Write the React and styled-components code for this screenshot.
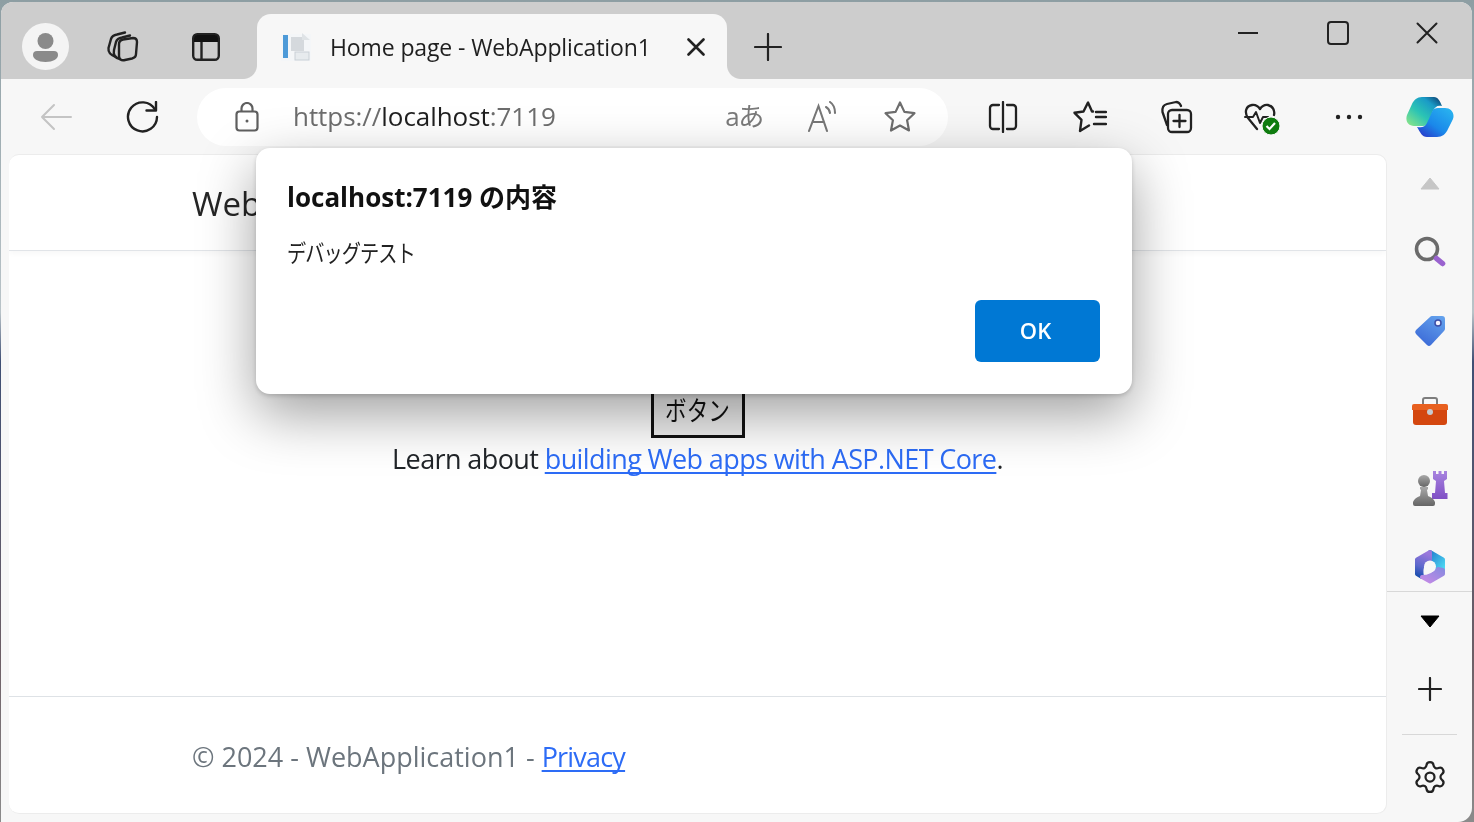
import React from "react";
import styled, { createGlobalStyle } from "styled-components";
import { Settings } from "lucide-react";

const Global = createGlobalStyle`
  html, body { margin: 0; padding: 0; background: #55606b; }
  body { font-family: "Open Sans", "Noto Sans CJK JP", sans-serif; overflow: hidden; }
  * { box-sizing: border-box; }
`;

const Desktop = styled.div`
  width: 1474px;
  height: 822px;
  padding: 2px 2px 0 1px;
  background: linear-gradient(180deg, #8d9ea3 0, #b9c3c8 38%, #3f4f74 44%, #6d5f66 80%, #8b8b8b 100%);
  position: relative;
  filter: blur(0.35px);
`;
const Win = styled.div`
  width: 100%;
  height: 100%;
  display: flex;
  flex-direction: column;
  background: #f7f7f7;
  border-radius: 12px 12px 14px 0;
  overflow: hidden;
`;
const TabStrip = styled.div`
  height: 77px;
  flex: none;
  background: #cdcdcd;
  display: flex;
  align-items: flex-end;
  padding-left: 11px;
`;
const StripSlot = styled.div`
  width: ${p => p.$w}px;
  height: 65px;
  display: flex;
  align-items: center;
  justify-content: center;
`;
const Tab = styled.div`
  width: 470px;
  height: 65px;
  margin-left: 11px;
  background: #f7f7f7;
  border-radius: 14px 14px 0 0;
  display: flex;
  align-items: center;
  padding: 0 22px 0 24px;
  position: relative;
  &::before, &::after {
    content: "";
    position: absolute;
    bottom: 0;
    width: 14px;
    height: 14px;
  }
  &::before { left: -14px; background: radial-gradient(circle at 0 0, #cdcdcd 13.5px, #f7f7f7 14.5px); }
  &::after { right: -14px; background: radial-gradient(circle at 100% 0, #cdcdcd 13.5px, #f7f7f7 14.5px); }
`;
const TabTitle = styled.span`
  flex: 1;
  margin-left: 19px;
  font-size: 23px;
  letter-spacing: -0.12px;
  color: #1f1f1f;
  white-space: nowrap;
`;
const Spacer = styled.div`
  flex: 1;
`;
const WinControls = styled.div`
  display: flex;
  align-self: flex-start;
  padding: 8px 0 0 0;
`;
const WinBtn = styled.div`
  width: 89.5px;
  height: 46px;
  display: flex;
  align-items: center;
  justify-content: center;
`;
const Toolbar = styled.div`
  height: 75px;
  flex: none;
  display: flex;
  align-items: center;
  padding: 0 0 0 12px;
`;
const ToolSlot = styled.div`
  width: ${p => p.$w || 86}px;
  height: 58px;
  flex: none;
  display: flex;
  align-items: center;
  justify-content: center;
  margin-left: ${p => p.$ml || 0}px;
`;
const Address = styled.div`
  width: 751px;
  height: 58px;
  margin: 0 12px;
  background: #fff;
  border-radius: 29px;
  display: flex;
  align-items: center;
  padding-left: 38px;
  flex: none;
`;
const Url = styled.div`
  width: 412px;
  margin-left: 34px;
  margin-top: -2px;
  font-size: 26px;
  letter-spacing: -0.05px;
  color: #1f1f1f;
  white-space: nowrap;
`;
const UrlDim = styled.span`
  color: #6d6d6d;
`;
const AddrIcon = styled.div`
  width: 78px;
  display: flex;
  justify-content: center;
  align-items: center;
`;
const TranslateGlyph = styled.span`
  font-size: 26px;
  letter-spacing: -1.5px;
  color: #7a7a7a;
  margin-top: -3px;
`;
const Body = styled.div`
  flex: 1;
  min-height: 0;
  display: flex;
  padding-left: 8px;
`;
const Page = styled.div`
  width: 1378px;
  height: 660px;
  flex: none;
  background: #fff;
  border: 1px solid #ececec;
  border-width: 1px 1px 1px 0;
  border-radius: 10px;
  display: flex;
  flex-direction: column;
  overflow: hidden;
`;
const Navbar = styled.div`
  height: 96px;
  flex: none;
  border-bottom: 1px solid #e1e4e8;
  box-shadow: 0 2px 6px rgba(0,0,0,.04);
  display: flex;
  align-items: center;
  padding-left: 183px;
  font-size: 33px;
  color: #262626;
  padding-top: 1px;
`;
const Main = styled.div`
  flex: 1;
  display: flex;
  flex-direction: column;
  align-items: center;
  padding-top: 134px;
  font-size: 27px;
  color: #212529;
`;
const PageButton = styled.button`
  width: 94px;
  height: 53px;
  background: #efefef;
  border: 3px solid #111;
  font: inherit;
  font-size: 27px;
  color: #111;
  padding: 0 0 4px;
  display: flex;
  align-items: center;
  justify-content: center;
`;
const NarrowJa = styled.span`
  display: inline-block;
  transform: scaleX(${p => p.$x});
  transform-origin: ${p => p.$origin || "center"};
`;
const Learn = styled.p`
  margin: 2px 0 0;
  letter-spacing: -0.6px;
  line-height: 38px;
`;
const Link = styled.a`
  color: #2d6cf6;
  text-decoration: underline;
  text-decoration-skip-ink: none;
  text-decoration-thickness: 2px;
  text-underline-offset: 3px;
  letter-spacing: ${p => p.$ls || "inherit"};
`;
const Footer = styled.div`
  height: 117px;
  flex: none;
  border-top: 1px solid #dee2e6;
  display: flex;
  align-items: center;
  padding: 2px 0 0 183px;
  font-size: 27px;
  color: #6c757d;
  letter-spacing: 0;
`;
const Sidebar = styled.div`
  flex: 1;
  min-width: 0;
  display: flex;
  flex-direction: column;
  align-items: center;
`;
const SideSlot = styled.div`
  height: ${p => p.$h}px;
  margin-top: ${p => p.$mt || 0}px;
  width: 100%;
  flex: none;
  display: flex;
  align-items: center;
  justify-content: center;
`;
const SideRule = styled.div`
  width: ${p => p.$w}px;
  height: 1px;
  flex: none;
  margin-top: ${p => p.$mt || 0}px;
  background: #d8d8d8;
`;
const Dialog = styled.div`
  position: absolute;
  left: 256px;
  top: 148px;
  width: 876px;
  height: 246px;
  background: #fff;
  border-radius: 14px;
  box-shadow: 0 20px 56px rgba(0,0,0,.38), 0 2px 4px rgba(0,0,0,.16);
  padding: 30px 32px 32px 31px;
  display: flex;
  flex-direction: column;
`;
const DialogTitle = styled.div`
  font-weight: 700;
  font-size: 26px;
  line-height: 38px;
  color: #111;
`;
const DialogText = styled.div`
  margin-top: 19px;
  font-size: 24px;
  line-height: 36px;
  color: #222;
  letter-spacing: -1.2px;
`;
const DialogActions = styled.div`
  margin-top: auto;
  display: flex;
  justify-content: flex-end;
`;
const OkButton = styled.button`
  width: 125px;
  height: 62px;
  border: 0;
  border-radius: 6px;
  background: #0078d4;
  color: #fff;
  padding: 0 4px 2px 0;
  font: 600 22px "Open Sans", sans-serif;
`;

const Ic = ({ w, h, vb, children, sw = 2.4, c = "#222" }) => (
  <svg width={w} height={h} viewBox={vb || `0 0 ${w} ${h}`} fill="none" stroke={c} strokeWidth={sw} strokeLinecap="round" strokeLinejoin="round">{children}</svg>
);

const Avatar = () => (
  <svg width="47" height="47" viewBox="0 0 47 47">
    <circle cx="23.5" cy="23.5" r="23.5" fill="#f4f4f4" />
    <circle cx="23.5" cy="18" r="8" fill="#8a8a8a" />
    <path d="M11 32a4 4 0 0 1 4-4h17a4 4 0 0 1 4 4c0 4-5 7-12.500 7S11 36 11 32z" fill="#8a8a8a" />
  </svg>
);
const TabGroup = () => (
  <Ic w={33} h={31}>
    <path d="M10 26 C4 24 2 21 2.500 17 L5 8 C6 5 8 4 11 3.500 L19 1.500" />
    <path d="M14 28 C9 27 7 24 8 19 L10 11 C11 8 13 7 16 6.500 L24 4.500" />
    <path d="M13 13 C13 10 15 9 17 8.500 L27 7 C30 7 31 8 31 11 L30 23 C30 26 28 27 26 27.500 L19 29 C15 30 13 28 13 25 Z" />
  </Ic>
);
const VerticalTabs = () => (
  <svg width="28" height="28" viewBox="0 0 28 28" fill="none">
    <rect x="1.200" y="1.200" width="25.600" height="25.600" rx="4" stroke="#222" strokeWidth="2.400" />
    <path d="M2 5a3 3 0 0 1 3-3h18a3 3 0 0 1 3 3v4H2z" fill="#111" />
    <path d="M9.500 9v18" stroke="#222" strokeWidth="2.400" />
  </svg>
);
const Favicon = () => (
  <svg width="30" height="30" viewBox="0 0 30 30">
    <rect x="0" y="2" width="30" height="27" fill="#f4f6f8" />
    <rect x="2" y="3" width="5" height="23" fill="#4d9ad8" />
    <rect x="10" y="5" width="13" height="14" fill="#d5d9dd" />
    <rect x="14" y="20" width="14" height="8" fill="#e7ebee" stroke="#c9d0d6" />
    <path d="M21 1l8 7H21z" fill="#dfe3e6" />
  </svg>
);
const Cross = ({ s = 16, sw = 2.6 }) => (
  <Ic w={s} h={s} sw={sw}><path d={`M1.500 1.500L${s - 1.5} ${s - 1.5}M${s - 1.5} 1.500L1.500 ${s - 1.5}`} /></Ic>
);
const Plus = ({ s = 28, sw = 2.2 }) => (
  <Ic w={s} h={s} sw={sw}><path d={`M${s / 2} 1V${s - 1}M1 ${s / 2}H${s - 1}`} /></Ic>
);
const Back = () => (
  <Ic w={32} h={28} c="#c4c4c4" sw={2}><path d="M31 14H2M14 2L2 14l12 12" /></Ic>
);
const Refresh = () => (
  <Ic w={33} h={32} sw={2.4}>
    <path d="M29 8.500A14.500 14.500 0 1 0 31 16" />
    <path d="M20.500 9.500H30V1" />
  </Ic>
);
const Lock = () => (
  <svg width="24" height="30" viewBox="0 0 24 30" fill="none" stroke="#5f5f5f" strokeWidth="2.200">
    <rect x="1.500" y="9.500" width="21" height="19" rx="3" />
    <path d="M6.500 9.500V6.500a5.500 5.500 0 0 1 11 0v3" />
    <circle cx="12" cy="19" r="1.500" fill="#5f5f5f" stroke="none" />
  </svg>
);
const Star = () => (
  <Ic w={34} h={34} c="#6e6e6e" sw={2.2}>
    <path d="M17 2.500l4.400 9.400 10.100 1.300-7.400 7.100 1.900 10.200L17 25.500l-9 5 1.900-10.200-7.400-7.100 10.100-1.300z" />
  </Ic>
);
const ReadAloud = () => (
  <svg width="32" height="32" viewBox="0 0 32 32" fill="none" stroke="#777" strokeWidth="2.100" strokeLinecap="round">
    <path d="M3 30L12.500 5 21 30M6.500 21H18" />
    <path d="M20 6c2 1 3.500 3 4 6M24 1c3 2 5 6 5 11" />
  </svg>
);
const Split = () => (
  <Ic w={30} h={32} sw={2.300}>
    <path d="M11 4H5a3 3 0 0 0-3 3v18a3 3 0 0 0 3 3h6M19 4h6a3 3 0 0 1 3 3v18a3 3 0 0 1-3 3h-6M15 1v30" />
  </Ic>
);
const Favs = () => (
  <Ic w={34} h={32} sw={2.400}>
    <path d="M20 10.500h-1L15 1.500l-4.500 9-9 1.300 7 7L7 30l9-5.500" />
    <path d="M23 11h10M23 16h10M21 23h12" />
  </Ic>
);
const Collections = () => (
  <Ic w={34} h={34} sw={2.300}>
    <path d="M8 25L3.500 12C3 8 4 5 8 4l9-2c3 0 4 1.500 5 4" />
    <rect x="9" y="10" width="23" height="22" rx="4" />
    <path d="M20.500 15v12M14.500 21h12" />
  </Ic>
);
const Health = () => (
  <svg width="38" height="36" viewBox="0 0 38 36" fill="none">
    <path d="M14 30L5 19C1 13 3 7 9 6c3-.500 6 1 8 4 2-3 5-4.500 8-4 5 1 7 6 6 10" stroke="#222" strokeWidth="2.300" strokeLinejoin="round" strokeLinecap="round" />
    <path d="M2 18h8l3-5 4 11 3-6h5" stroke="#222" strokeWidth="2" strokeLinejoin="round" strokeLinecap="round" />
    <circle cx="28" cy="27" r="9" fill="#107c10" stroke="#f7f7f7" strokeWidth="1" />
    <path d="M23.500 27l3 3 5.500-6" stroke="#fff" strokeWidth="2.200" fill="none" />
  </svg>
);
const Dots = () => (
  <svg width="28" height="6" viewBox="0 0 28 6" fill="#222"><circle cx="3" cy="3" r="2.200" /><circle cx="14" cy="3" r="2.200" /><circle cx="25" cy="3" r="2.200" /></svg>
);
const Copilot = () => (
  <svg width="48" height="40" viewBox="0 0 48 40">
    <defs>
      <linearGradient id="cpa" x1="1" y1="0.100" x2="0.100" y2="1"><stop offset="0" stopColor="#0e4474" /><stop offset=".25" stopColor="#1a9bc7" /><stop offset=".6" stopColor="#2bc4b4" /><stop offset="1" stopColor="#86e38a" /></linearGradient>
      <linearGradient id="cpb" x1="1" y1="0" x2="0.100" y2="1"><stop offset="0" stopColor="#2bb8f0" /><stop offset=".6" stopColor="#1a88ea" /><stop offset="1" stopColor="#2a36c8" /></linearGradient>
    </defs>
    <path d="M16 0H28C32 0 34 4 36 9 31 8 29 10 27 14L22 26C21 28 20 29 17 29H8C2 29-1 24 1 18L6 7C8 3 11 0 16 0Z" fill="url(#cpa)" />
    <path d="M32 11H39C45 11 49 16 47 22L42 32C40 37 36 40 31 40H21C16 40 14 35 11 30 16 31 19 30 21 26L26 15C27 12 29 11 32 11Z" fill="url(#cpb)" />
  </svg>
);
const CaretUp = () => <svg width="20" height="13" viewBox="0 0 20 13"><path d="M10 1l9 11H1z" fill="#c6c6c6" stroke="#c6c6c6" strokeLinejoin="round" /></svg>;
const CaretDown = () => <svg width="20" height="13" viewBox="0 0 20 13"><path d="M1 1h18l-9 11z" fill="#000" stroke="#000" strokeLinejoin="round" /></svg>;
const Search = () => (
  <svg width="32" height="32" viewBox="0 0 32 32" fill="none">
    <circle cx="13" cy="13" r="10.500" stroke="#6b6b6b" strokeWidth="3.600" />
    <path d="M22.500 22.500l6 5" stroke="#9a63cf" strokeWidth="5.500" strokeLinecap="round" />
  </svg>
);
const TagIcon = () => (
  <svg width="32" height="32" viewBox="0 0 32 32">
    <defs><linearGradient id="tg" x1="0.800" y1="0" x2="0.200" y2="1"><stop offset="0" stopColor="#62a0ec" /><stop offset="1" stopColor="#3a68d6" /></linearGradient></defs>
    <path d="M18 1h10a3 3 0 0 1 3 3v10a3 3 0 0 1-1 2L17 30a3 3 0 0 1-4 0L2 19a3 3 0 0 1 0-4L16 2a3 3 0 0 1 2-1z" fill="url(#tg)" />
    <circle cx="24" cy="8" r="3" fill="#f4f4ff" stroke="#3b4ea8" strokeWidth="1.500" />
  </svg>
);
const Toolbox = () => (
  <svg width="36" height="28" viewBox="0 0 36 28">
    <path d="M11 7V3a2 2 0 0 1 2-2h10a2 2 0 0 1 2 2v4" fill="none" stroke="#7d7d7d" strokeWidth="2" />
    <path d="M2 7h32a2 2 0 0 1 2 2v4H0V9a2 2 0 0 1 2-2z" fill="#e8601f" />
    <path d="M1 13h34v12a3 3 0 0 1-3 3H4a3 3 0 0 1-3-3z" fill="#d4470f" />
    <circle cx="18" cy="15" r="3" fill="#c6cbd0" />
  </svg>
);
const Games = () => (
  <svg width="36" height="36" viewBox="0 0 36 36">
    <defs>
      <linearGradient id="pn" x1="0" y1="0" x2="0" y2="1"><stop offset="0" stopColor="#a8a8a8" /><stop offset="1" stopColor="#666" /></linearGradient>
      <linearGradient id="rk" x1="0" y1="0" x2="0" y2="1"><stop offset="0" stopColor="#a884e0" /><stop offset="1" stopColor="#7f4fc4" /></linearGradient>
    </defs>
    <path d="M21 0h3v3h2.500V0h3v3H32V0h3v8l-3 2 1 12h2.500v6H20v-6h3l1-12-3-2z" fill="url(#rk)" />
    <circle cx="12" cy="10" r="6" fill="url(#pn)" />
    <path d="M8 16h8v2l-1 1 1 6c3 1 6 3 7 6v2a2 2 0 0 1-2 2H3a2 2 0 0 1-2-2v-2c1-3 4-5 7-6l1-6-1-1z" fill="url(#pn)" />
  </svg>
);
const M365 = () => (
  <svg width="32" height="35" viewBox="0 0 32 35" strokeLinejoin="round">
    <defs>
      <linearGradient id="m1" x1="0.500" y1="0" x2="0.300" y2="1"><stop offset="0" stopColor="#9a78dc" /><stop offset=".6" stopColor="#5c68cc" /><stop offset="1" stopColor="#1d4fb0" /></linearGradient>
      <linearGradient id="m2" x1="0" y1="0" x2="1" y2="1"><stop offset="0" stopColor="#1f78cc" /><stop offset="1" stopColor="#4fdcf4" /></linearGradient>
      <linearGradient id="m3" x1="1" y1="0" x2="0" y2="1"><stop offset="0" stopColor="#8a8ae0" /><stop offset="1" stopColor="#c58ae6" /></linearGradient>
    </defs>
    <path d="M16 3L29 10.500V22L23 20C23 15 20 12 14 11Z" fill="url(#m2)" stroke="url(#m2)" strokeWidth="4" />
    <path d="M16 3L3 10.500V25L8 28C7 23 7 18 10 14 12 12 14 11 16 11Z" fill="url(#m1)" stroke="url(#m1)" strokeWidth="4" />
    <path d="M29 21V25L16 32.500 8 28C14 28 20 26 24 20Z" fill="url(#m3)" stroke="url(#m3)" strokeWidth="4" />
    <circle cx="16" cy="17.500" r="6" fill="#f7f7f7" />
  </svg>
);

export default function App() {
  return (
    <>
      <Global />
      <Desktop>
        <Win>
          <TabStrip>
            <StripSlot $w={66}><Avatar /></StripSlot>
            <StripSlot $w={88}><TabGroup /></StripSlot>
            <StripSlot $w={80}><VerticalTabs /></StripSlot>
            <Tab>
              <Favicon />
              <TabTitle>Home page - WebApplication1</TabTitle>
              <Cross s={18} />
            </Tab>
            <StripSlot $w={82}><Plus /></StripSlot>
            <Spacer />
            <WinControls>
              <WinBtn><Ic w={20} h={2} sw={2}><path d="M0 1H20" /></Ic></WinBtn>
              <WinBtn><Ic w={22} h={24} sw={2}><rect x="1" y="1" width="20" height="22" rx="3" /></Ic></WinBtn>
              <WinBtn><Cross s={22} sw={2} /></WinBtn>
            </WinControls>
          </TabStrip>
          <Toolbar>
            <ToolSlot><Back /></ToolSlot>
            <ToolSlot><Refresh /></ToolSlot>
            <Address>
              <Lock />
              <Url><UrlDim>https://</UrlDim>localhost<UrlDim>:7119</UrlDim></Url>
              <AddrIcon><TranslateGlyph>aあ</TranslateGlyph></AddrIcon>
              <AddrIcon><ReadAloud /></AddrIcon>
              <AddrIcon><Star /></AddrIcon>
            </Address>
            <ToolSlot $w={86.4}><Split /></ToolSlot>
            <ToolSlot $w={86.4}><Favs /></ToolSlot>
            <ToolSlot $w={86.4}><Collections /></ToolSlot>
            <ToolSlot $w={86.4}><Health /></ToolSlot>
            <ToolSlot $w={86.4}><Dots /></ToolSlot>
            <ToolSlot $w={60} $ml={8}><Copilot /></ToolSlot>
          </Toolbar>
          <Body>
            <Page>
              <Navbar>Web</Navbar>
              <Main>
                <PageButton><NarrowJa $x={0.8}>ボタン</NarrowJa></PageButton>
                <Learn>Learn about <Link>building Web apps with ASP.NET Core</Link>.</Learn>
              </Main>
              <Footer>© 2024 - WebApplication1 -&nbsp;<Link $ls="-0.8px">Privacy</Link></Footer>
            </Page>
            <Sidebar>
              <SideSlot $h={58}><CaretUp /></SideSlot>
              <SideSlot $h={50} $mt={15}><Search /></SideSlot>
              <SideSlot $h={50} $mt={29}><TagIcon /></SideSlot>
              <SideSlot $h={50} $mt={30}><Toolbox /></SideSlot>
              <SideSlot $h={50} $mt={28}><Games /></SideSlot>
              <SideSlot $h={50} $mt={27}><M365 /></SideSlot>
              <SideRule $w={85} />
              <SideSlot $h={58}><CaretDown /></SideSlot>
              <SideSlot $h={78}><Plus s={24} /></SideSlot>
              <SideRule $w={55} $mt={6} />
              <SideSlot $h={84}><Settings size={36} strokeWidth={1.5} color="#222" /></SideSlot>
            </Sidebar>
          </Body>
        </Win>
        <Dialog>
          <DialogTitle>localhost:7119 の内容</DialogTitle>
          <DialogText><NarrowJa $x={0.8} $origin="left">デバッグテスト</NarrowJa></DialogText>
          <DialogActions><OkButton>OK</OkButton></DialogActions>
        </Dialog>
      </Desktop>
    </>
  );
}
